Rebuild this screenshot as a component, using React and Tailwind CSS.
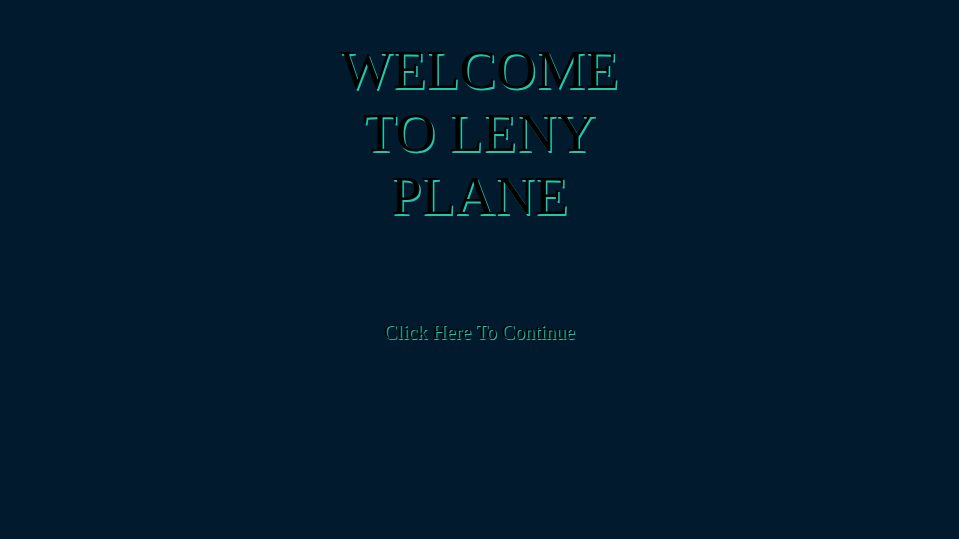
export default function App() {
  return (
    <div className="min-h-screen w-full bg-[#021a2e] flex flex-col items-center pt-[38px] font-['Liberation_Serif',serif]">
      <h1 className="w-[300px] text-center text-[55px] leading-[63px] text-black [text-shadow:1.5px_1.5px_0_#1fc7ad]">
        WELCOME TO LENY PLANE
      </h1>
      <button className="mt-[90px] text-[20px] text-black [text-shadow:1px_1px_0_#1fc7ad] cursor-pointer">
        Click Here To Continue
      </button>
    </div>
  );
}
